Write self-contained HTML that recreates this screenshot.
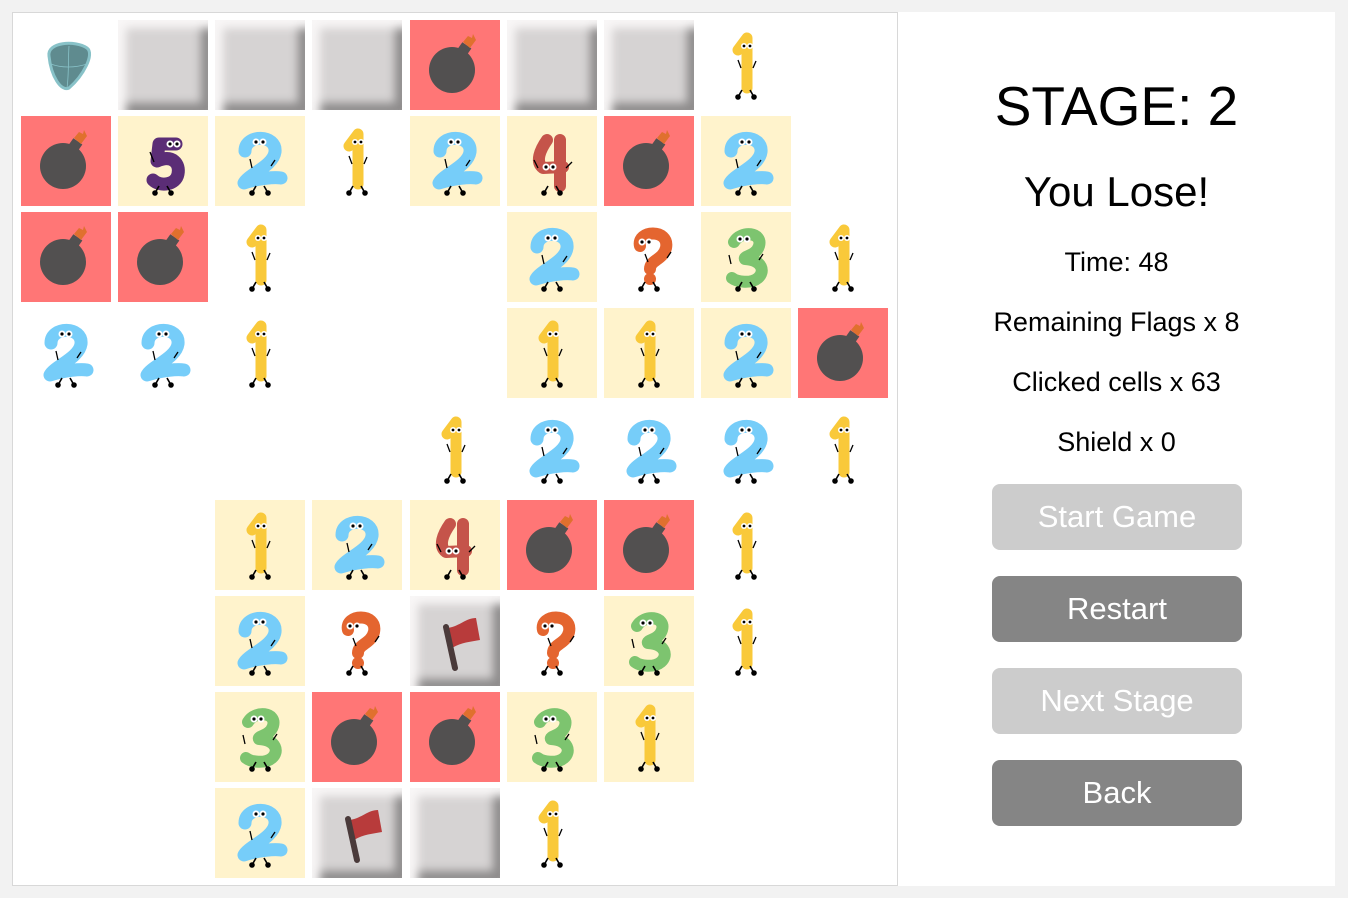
<!DOCTYPE html>
<html><head><meta charset="utf-8"><style>
body{margin:0;width:1348px;height:898px;background:#f2f2f2;font-family:"Liberation Sans",sans-serif;position:relative;overflow:hidden}
#board{position:absolute;left:12px;top:12px;width:884px;height:872px;background:#fff;border:1px solid #d8d8d8}
#side{position:absolute;left:898px;top:12px;width:437px;height:874px;background:#fff}
.c{position:absolute;width:90px;height:90px}
.c svg{width:90px;height:90px;display:block}
.y{background:#fff3cc}.r{background:#ff7676}
.g{background:#d6d3d3;box-shadow:inset 8px 8px 9px #f8f6f6,inset -7px -7px 9px #8e8c8c}
.t{position:absolute;left:0;width:437px;text-align:center;color:#000}
.b{position:absolute;left:94px;width:250px;height:66px;border-radius:8px;color:#fff;font-size:31px;line-height:66px;text-align:center}
.lt{background:#cccccc}.dk{background:#858585}
</style></head><body>
<svg width="0" height="0" style="position:absolute">
<defs>
<g id="legs" stroke="#000" stroke-width="1.6" fill="#000"><line x1="41" y1="70" x2="37" y2="77"/><line x1="49" y1="70" x2="53" y2="77"/><circle cx="37" cy="77" r="2"/><circle cx="53" cy="77" r="2"/></g>
<symbol id="d1" viewBox="0 0 90 90"><path d="M37 30 L46 18 L46 68" stroke="#f9c93a" stroke-width="11" fill="none" stroke-linecap="round" stroke-linejoin="round"/><g stroke="#000" stroke-width="1.3"><line x1="40" y1="48" x2="37" y2="40"/><line x1="52" y1="48" x2="55" y2="41"/></g><circle cx="43" cy="26" r="3" fill="#fff"/><circle cx="49" cy="26" r="3" fill="#fff"/><circle cx="43" cy="26" r="1.4"/><circle cx="49" cy="26" r="1.4"/><use href="#legs"/></symbol>
<symbol id="d2" viewBox="0 0 90 90"><path d="M30 35 C30 18 62 18 60 36 C58 50 34 58 29 67 C44 62 60 61 66 62" stroke="#76cdf9" stroke-width="13" fill="none" stroke-linecap="round" stroke-linejoin="round"/><g stroke="#000" stroke-width="1.3"><line x1="37" y1="52" x2="35" y2="43"/><line x1="56" y1="50" x2="60" y2="44"/></g><circle cx="41" cy="26" r="3.5" fill="#fff"/><circle cx="48" cy="26" r="3.5" fill="#fff"/><circle cx="41" cy="26" r="1.6"/><circle cx="48" cy="26" r="1.6"/><use href="#legs"/></symbol>
<symbol id="d3" viewBox="0 0 90 90"><path d="M33 30 C40 18 62 20 58 34 C55 44 42 44 44 47 C62 48 64 60 57 66 C50 72 36 70 31 66" stroke="#7dc46f" stroke-width="12" fill="none" stroke-linecap="round" stroke-linejoin="round"/><g stroke="#000" stroke-width="1.3"><line x1="30" y1="52" x2="28" y2="43"/><line x1="58" y1="48" x2="62" y2="42"/></g><circle cx="39" cy="27" r="3.5" fill="#fff"/><circle cx="46" cy="27" r="3.5" fill="#fff"/><circle cx="39" cy="27" r="1.6"/><circle cx="46" cy="27" r="1.6"/><use href="#legs"/></symbol>
<symbol id="d4" viewBox="0 0 90 90"><path d="M40 24 C33 34 28 46 36 52 L56 51 M53 24 L53 70" stroke="#c5544a" stroke-width="12" fill="none" stroke-linecap="round" stroke-linejoin="round"/><g stroke="#000" stroke-width="1.3"><line x1="31" y1="52" x2="27" y2="44"/><line x1="59" y1="52" x2="65" y2="46"/></g><circle cx="39" cy="51" r="3.5" fill="#fff"/><circle cx="46" cy="51" r="3.5" fill="#fff"/><circle cx="39" cy="51" r="1.6"/><circle cx="46" cy="51" r="1.6"/><use href="#legs"/></symbol>
<symbol id="d5" viewBox="0 0 90 90"><path d="M58 28 L41 28 L39 45 C55 38 62 48 60 58 C58 69 42 71 35 64" stroke="#5b2d76" stroke-width="13" fill="none" stroke-linecap="round" stroke-linejoin="round"/><g stroke="#000" stroke-width="1.3"><line x1="36" y1="46" x2="32" y2="36"/></g><circle cx="52" cy="28" r="3.5" fill="#fff"/><circle cx="59" cy="28" r="3.5" fill="#fff"/><circle cx="52" cy="28" r="1.6"/><circle cx="59" cy="28" r="1.6"/><use href="#legs"/></symbol>
<symbol id="dq" viewBox="0 0 90 90"><path d="M36 34 C32 18 66 16 62 36 C59 48 46 48 46 57" stroke="#e4652f" stroke-width="12" fill="none" stroke-linecap="round" stroke-linejoin="round"/><circle cx="46" cy="67" r="6" fill="#e4652f"/><g stroke="#000" stroke-width="1.3"><line x1="44" y1="50" x2="41" y2="42"/><line x1="63" y1="46" x2="67" y2="40"/></g><circle cx="38" cy="30" r="3.5" fill="#fff"/><circle cx="45" cy="30" r="3.5" fill="#fff"/><circle cx="38" cy="30" r="1.6"/><circle cx="45" cy="30" r="1.6"/><use href="#legs"/></symbol>
<symbol id="bomb" viewBox="0 0 90 90"><rect x="48" y="24" width="11" height="12" fill="#525050" transform="rotate(35 53 30)"/><path d="M53 22 L58 16 L62 18 L63 14 L66 20 L60 28 Z" fill="#e0702e"/><circle cx="42" cy="50" r="23" fill="#525050"/></symbol>
<symbol id="flag" viewBox="0 0 90 90"><path d="M38 32 C50 30 56 22 66 22 L70 44 C60 46 52 46 42 52 Z" fill="#b83b3b"/><line x1="36" y1="31" x2="45" y2="72" stroke="#4a3a3a" stroke-width="6" stroke-linecap="round"/></symbol>
<symbol id="shield" viewBox="0 0 90 90"><path d="M28 36 C26 22 54 20 66 28 C74 34 62 56 48 68 C40 72 30 56 28 36 Z" fill="#5f8b8f" stroke="#88c2c8" stroke-width="3"/><path d="M30 44 C40 48 54 48 66 44 M48 26 C47 40 48 54 46 68" stroke="#88c2c8" stroke-width="0.8" fill="none"/></symbol>
</defs></svg>

<div id="board"></div>
<div style="position:absolute;left:0;top:0">
<div class="c" style="left:21px;top:20px"><svg><use href="#shield"/></svg></div>
<div class="c g" style="left:118px;top:20px"></div>
<div class="c g" style="left:215px;top:20px"></div>
<div class="c g" style="left:312px;top:20px"></div>
<div class="c r" style="left:410px;top:20px"><svg><use href="#bomb"/></svg></div>
<div class="c g" style="left:507px;top:20px"></div>
<div class="c g" style="left:604px;top:20px"></div>
<div class="c" style="left:701px;top:20px"><svg><use href="#d1"/></svg></div>
<div class="c r" style="left:21px;top:116px"><svg><use href="#bomb"/></svg></div>
<div class="c y" style="left:118px;top:116px"><svg><use href="#d5"/></svg></div>
<div class="c y" style="left:215px;top:116px"><svg><use href="#d2"/></svg></div>
<div class="c" style="left:312px;top:116px"><svg><use href="#d1"/></svg></div>
<div class="c y" style="left:410px;top:116px"><svg><use href="#d2"/></svg></div>
<div class="c y" style="left:507px;top:116px"><svg><use href="#d4"/></svg></div>
<div class="c r" style="left:604px;top:116px"><svg><use href="#bomb"/></svg></div>
<div class="c y" style="left:701px;top:116px"><svg><use href="#d2"/></svg></div>
<div class="c r" style="left:21px;top:212px"><svg><use href="#bomb"/></svg></div>
<div class="c r" style="left:118px;top:212px"><svg><use href="#bomb"/></svg></div>
<div class="c" style="left:215px;top:212px"><svg><use href="#d1"/></svg></div>
<div class="c y" style="left:507px;top:212px"><svg><use href="#d2"/></svg></div>
<div class="c" style="left:604px;top:212px"><svg><use href="#dq"/></svg></div>
<div class="c y" style="left:701px;top:212px"><svg><use href="#d3"/></svg></div>
<div class="c" style="left:798px;top:212px"><svg><use href="#d1"/></svg></div>
<div class="c" style="left:21px;top:308px"><svg><use href="#d2"/></svg></div>
<div class="c" style="left:118px;top:308px"><svg><use href="#d2"/></svg></div>
<div class="c" style="left:215px;top:308px"><svg><use href="#d1"/></svg></div>
<div class="c y" style="left:507px;top:308px"><svg><use href="#d1"/></svg></div>
<div class="c y" style="left:604px;top:308px"><svg><use href="#d1"/></svg></div>
<div class="c y" style="left:701px;top:308px"><svg><use href="#d2"/></svg></div>
<div class="c r" style="left:798px;top:308px"><svg><use href="#bomb"/></svg></div>
<div class="c" style="left:410px;top:404px"><svg><use href="#d1"/></svg></div>
<div class="c" style="left:507px;top:404px"><svg><use href="#d2"/></svg></div>
<div class="c" style="left:604px;top:404px"><svg><use href="#d2"/></svg></div>
<div class="c" style="left:701px;top:404px"><svg><use href="#d2"/></svg></div>
<div class="c" style="left:798px;top:404px"><svg><use href="#d1"/></svg></div>
<div class="c y" style="left:215px;top:500px"><svg><use href="#d1"/></svg></div>
<div class="c y" style="left:312px;top:500px"><svg><use href="#d2"/></svg></div>
<div class="c y" style="left:410px;top:500px"><svg><use href="#d4"/></svg></div>
<div class="c r" style="left:507px;top:500px"><svg><use href="#bomb"/></svg></div>
<div class="c r" style="left:604px;top:500px"><svg><use href="#bomb"/></svg></div>
<div class="c" style="left:701px;top:500px"><svg><use href="#d1"/></svg></div>
<div class="c y" style="left:215px;top:596px"><svg><use href="#d2"/></svg></div>
<div class="c" style="left:312px;top:596px"><svg><use href="#dq"/></svg></div>
<div class="c g" style="left:410px;top:596px"><svg><use href="#flag"/></svg></div>
<div class="c" style="left:507px;top:596px"><svg><use href="#dq"/></svg></div>
<div class="c y" style="left:604px;top:596px"><svg><use href="#d3"/></svg></div>
<div class="c" style="left:701px;top:596px"><svg><use href="#d1"/></svg></div>
<div class="c y" style="left:215px;top:692px"><svg><use href="#d3"/></svg></div>
<div class="c r" style="left:312px;top:692px"><svg><use href="#bomb"/></svg></div>
<div class="c r" style="left:410px;top:692px"><svg><use href="#bomb"/></svg></div>
<div class="c y" style="left:507px;top:692px"><svg><use href="#d3"/></svg></div>
<div class="c y" style="left:604px;top:692px"><svg><use href="#d1"/></svg></div>
<div class="c y" style="left:215px;top:788px"><svg><use href="#d2"/></svg></div>
<div class="c g" style="left:312px;top:788px"><svg><use href="#flag"/></svg></div>
<div class="c g" style="left:410px;top:788px"></div>
<div class="c" style="left:507px;top:788px"><svg><use href="#d1"/></svg></div>
</div>

<div id="side">
<div class="t" style="top:62px;font-size:55px;line-height:64px">STAGE: 2</div>
<div class="t" style="top:156px;font-size:42px;line-height:48px">You Lose!</div>
<div class="t" style="top:234px;font-size:27px;line-height:32px">Time: 48</div>
<div class="t" style="top:294px;font-size:27px;line-height:32px">Remaining Flags x 8</div>
<div class="t" style="top:354px;font-size:27px;line-height:32px">Clicked cells x 63</div>
<div class="t" style="top:414px;font-size:27px;line-height:32px">Shield x 0</div>
<div class="b lt" style="top:472px">Start Game</div>
<div class="b dk" style="top:564px">Restart</div>
<div class="b lt" style="top:656px">Next Stage</div>
<div class="b dk" style="top:748px">Back</div>
</div>
</body></html>
